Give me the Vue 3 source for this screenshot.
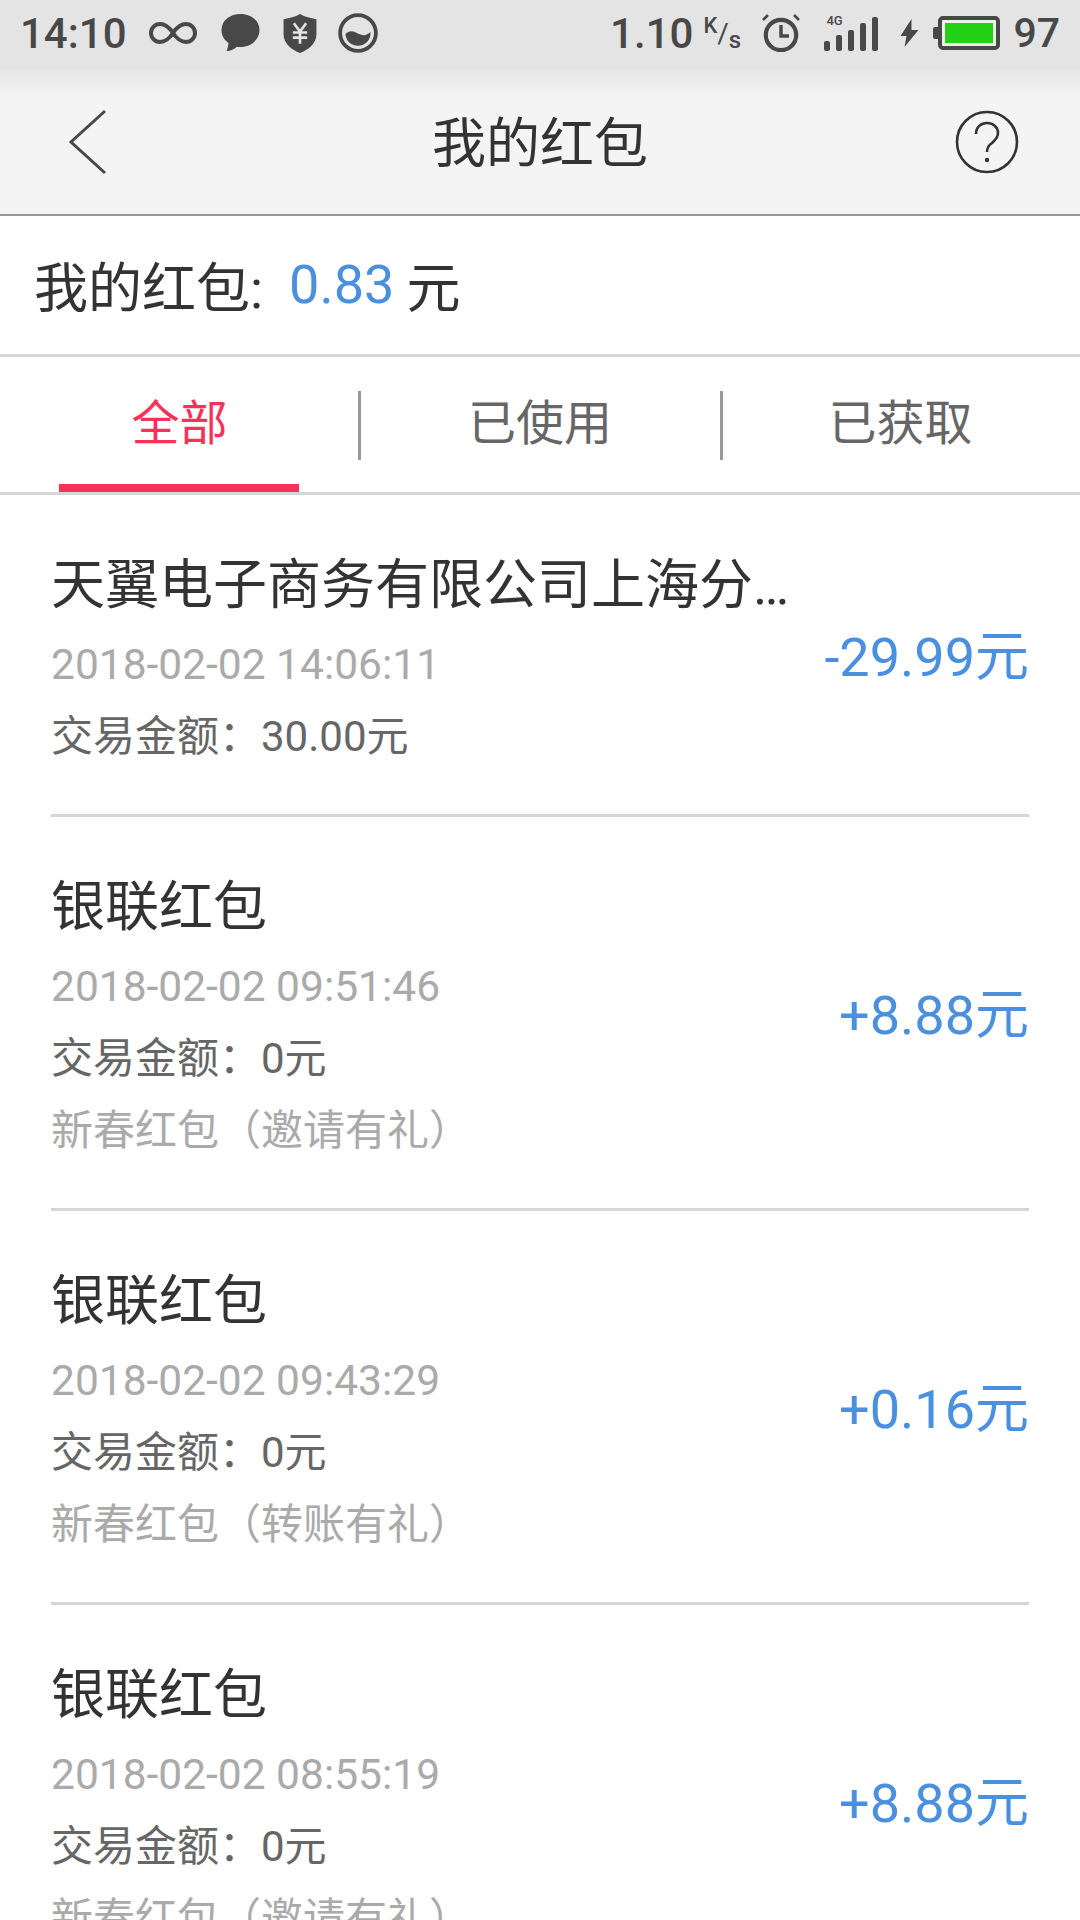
<template>
  <div class="page">
    <div class="statusbar">
      <div class="status-left">
        <span class="time">14:10</span>
        <svg class="ic-inf" width="48" height="26" viewBox="0 0 48 26"><path d="M24 13C20 7 16 4 11 4a9 9 0 0 0 0 18c5 0 9-3 13-9s8-9 13-9a9 9 0 0 1 0 18c-5 0-9-3-13-9z" fill="none" stroke="#484848" stroke-width="4"/></svg>
        <svg class="ic-msg" width="39" height="38" viewBox="0 0 38 38"><path d="M19 0C9 0 0 6 0 16c0 6 3 10 7 13 0 2-1 6-2 8 4 0 8-2 10-4 1 0 3 0 4 0 10 0 19-7 19-17S29 0 19 0z" fill="#484848"/></svg>
        <svg class="ic-shield" width="34" height="39" viewBox="0 0 32 38"><path d="M16 0c5 3 10 4 16 5v15c0 9-8 15-16 18C8 35 0 29 0 20V5c6-1 11-2 16-5z" fill="#484848"/><path d="M10 9l6 8 6-8M9 18h14M9 23h14M16 17v12" fill="none" stroke="#e4e4e4" stroke-width="2.6"/></svg>
        <svg class="ic-wave" width="40" height="40" viewBox="0 0 38 38"><circle cx="19" cy="19" r="17" fill="none" stroke="#484848" stroke-width="3.6"/><path d="M7 20c5-5 9-2 13 0s8 1 11-2c0 8-5 13-12 13S8 27 7 20z" fill="#484848"/></svg>
      </div>
      <div class="status-right">
        <span class="speed">1.10</span>
        <span class="unit"><i>K</i><em>/</em><b>s</b></span>
        <svg class="ic-alarm" width="38" height="38" viewBox="0 0 38 38"><circle cx="19" cy="21" r="15.2" fill="none" stroke="#484848" stroke-width="4.2"/><path d="M19 11v11h8" fill="none" stroke="#484848" stroke-width="3.4"/><path d="M1 6l5-5M37 6l-5-5" stroke="#484848" stroke-width="2.6"/></svg>
        <div class="signal">
          <span class="net">4G</span>
          <span class="bar b1"></span><span class="bar b2"></span><span class="bar b3"></span><span class="bar b4"></span><span class="bar b5"></span>
        </div>
        <svg class="ic-bolt" width="19" height="28" viewBox="0 0 18 28"><path d="M11 0L0 17h6L4 28 18 11h-7z" fill="#484848"/></svg>
        <div class="battery"><div class="level"></div></div>
        <span class="percent">97</span>
      </div>
    </div>

    <div class="navbar">
      <svg class="back" width="40" height="66" viewBox="0 0 40 66"><path d="M37 2L3 33l34 31" fill="none" stroke="#484848" stroke-width="3"/></svg>
      <div class="nav-title">我的红包</div>
      <svg class="help" width="64" height="64" viewBox="0 0 64 64"><circle cx="32" cy="32" r="30" fill="none" stroke="#333" stroke-width="2.6"/><path d="M21 24c0-7 5-11 11-11s11 4 11 10c0 5-3 7-6 10-3 2-5 4-5 9" fill="none" stroke="#333" stroke-width="2.6"/><circle cx="32" cy="50" r="2.2" fill="#333"/></svg>
    </div>

    <div class="balance">
      <span>我的红包:</span>
      <span class="amount">0.83</span>
      <span class="yuan">元</span>
    </div>

    <div class="tabs">
      <div class="tab active">全部</div>
      <div class="tab">已使用</div>
      <div class="tab">已获取</div>
    </div>

    <div class="list">
      <div v-for="item in records" :key="item.time" class="record">
        <div class="info">
          <div class="name">{{ item.name }}</div>
          <div class="time-row">{{ item.time }}</div>
          <div class="trade">{{ tradeLabel }}{{ item.trade }}</div>
          <div v-if="item.note" class="note">{{ notePrefix }}{{ open }}{{ item.note }}{{ close }}</div>
        </div>
        <div class="value">{{ item.value }}</div>
      </div>
    </div>
  </div>
</template>

<script setup>
// full-width punctuation, so it comes from the CJK font
const tradeLabel = '交易金额\uFF1A'
const notePrefix = '新春红包'
const open = '\uFF08'
const close = '\uFF09'

const records = [
  { name: '天翼电子商务有限公司上海分公司', time: '2018-02-02 14:06:11', trade: '30.00元', value: '-29.99元' },
  { name: '银联红包', time: '2018-02-02 09:51:46', trade: '0元', note: '邀请有礼', value: '+8.88元' },
  { name: '银联红包', time: '2018-02-02 09:43:29', trade: '0元', note: '转账有礼', value: '+0.16元' },
  { name: '银联红包', time: '2018-02-02 08:55:19', trade: '0元', note: '邀请有礼', value: '+8.88元' }
]
</script>

<style>
html, body {
  margin: 0;
  background: #fff;
}
</style>

<style scoped>
.page {
  width: 1080px;
  height: 1920px;
  overflow: hidden;
  background: #fff;
  font-family: Roboto, "Noto Sans CJK SC", sans-serif;
}

.statusbar {
  height: 70px;
  background: #e4e4e4;
  display: flex;
  justify-content: space-between;
  align-items: center;
  color: #484848;
  box-sizing: border-box;
  padding: 0 20px 4px;
}
.status-left, .status-right {
  display: flex;
  align-items: center;
}
.time {
  font-size: 42px;
  font-weight: 500;
  margin-right: 22px;
}
.ic-msg { margin-left: 24px; }
.ic-shield { margin-left: 23px; }
.ic-wave { margin-left: 21px; }
.speed {
  font-size: 42px;
  font-weight: 500;
}
.unit {
  font-size: 22px;
  font-weight: 500;
  margin-left: 10px;
  display: flex;
  align-items: center;
  width: 36px;
}
.unit i { font-style: normal; transform: translateY(-8px); }
.unit em { font-style: normal; font-size: 28px; font-weight: 400; }
.unit b { font-weight: 500; font-size: 24px; transform: translateY(7px); }
.ic-alarm { margin-left: 23px; }
.signal {
  position: relative;
  margin-left: 24px;
  width: 54px;
  height: 36px;
  display: flex;
  align-items: flex-end;
  justify-content: space-between;
}
.net {
  position: absolute;
  left: 2px;
  top: -2px;
  font-size: 13px;
  font-weight: 500;
}
.bar {
  width: 6px;
  background: #484848;
  border-radius: 2px;
}
.b1 { height: 10px; }
.b2 { height: 16px; }
.b3 { height: 21px; }
.b4 { height: 28px; }
.b5 { height: 34px; }
.ic-bolt { margin-left: 22px; }
.battery {
  position: relative;
  margin-left: 19px;
  width: 62px;
  height: 34px;
  box-sizing: border-box;
  border: 4px solid #484848;
  border-radius: 5px;
  padding: 3px;
  background: #eef4ea;
}
.battery::before {
  content: "";
  position: absolute;
  left: -9px;
  top: 7px;
  width: 5px;
  height: 12px;
  background: #484848;
  border-radius: 2px 0 0 2px;
}
.level {
  height: 100%;
  background: #22d016;
}
.percent {
  font-size: 41px;
  font-weight: 500;
  margin-left: 13px;
}

.navbar {
  height: 146px;
  box-sizing: border-box;
  border-bottom: 2px solid #999;
  background: linear-gradient(#e6e6e6, #f4f4f4 28px);
  display: grid;
  grid-template-columns: 1fr auto 1fr;
  align-items: center;
  padding: 0 61px 0 68px;
}
.back { justify-self: start; }
.help { justify-self: end; }
.nav-title {
  font-size: 54px;
  color: #333;
  margin: 0 7px 6px 0;
}

.balance {
  height: 141px;
  box-sizing: border-box;
  border-bottom: 3px solid #d6d6d6;
  display: flex;
  align-items: center;
  padding: 0 0 2px 34px;
  font-size: 54px;
  color: #333;
}
.amount {
  color: #4a90de;
  margin-left: 26px;
}
.yuan { margin-left: 12px; }

.tabs {
  height: 138px;
  box-sizing: border-box;
  border-bottom: 3px solid #d6d6d6;
  display: grid;
  grid-template-columns: 359px 362px 359px;
}
.tab {
  position: relative;
  display: flex;
  align-items: center;
  justify-content: center;
  font-size: 48px;
  color: #666;
  padding-bottom: 12px;
}
.tab + .tab::before {
  content: "";
  position: absolute;
  left: -1px;
  top: 34px;
  height: 69px;
  width: 3px;
  background: #999;
}
.tab.active { color: #f6325a; }
.tab.active::after {
  content: "";
  position: absolute;
  left: 59px;
  bottom: 0;
  width: 240px;
  height: 8px;
  background: #f6325a;
}

.list {
  padding: 0 51px;
}
.record {
  box-sizing: border-box;
  border-bottom: 3px solid #d6d6d6;
  padding: 55px 0 41px;
  display: flex;
  justify-content: space-between;
  align-items: center;
}
.info {
  width: 745px;
}
.name {
  font-size: 54px;
  color: #333;
  white-space: nowrap;
  overflow: hidden;
  text-overflow: ellipsis;
  line-height: 72px;
  margin-bottom: 7px;
}
.time-row {
  font-size: 42.5px;
  color: #aaa;
  line-height: 72px;
}
.trade {
  font-size: 42px;
  color: #666;
  line-height: 72px;
}
.note {
  font-size: 42px;
  color: #aaa;
  line-height: 72px;
}
.value {
  font-size: 54px;
  color: #4a90de;
  margin-bottom: 18px;
}
</style>
